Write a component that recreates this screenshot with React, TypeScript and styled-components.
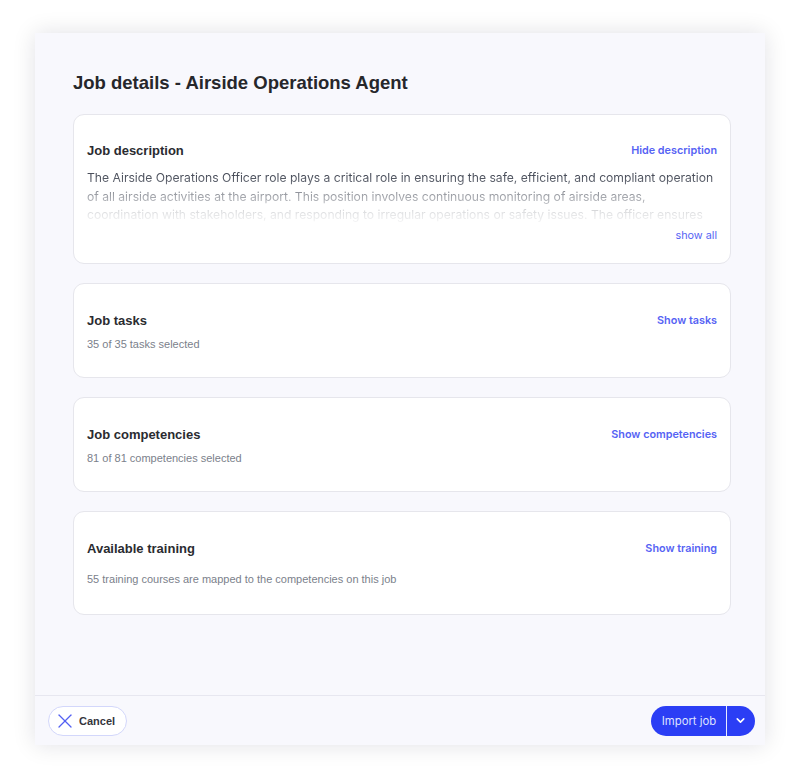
import React from "react";
import styled, { createGlobalStyle } from "styled-components";
import { X, ChevronDown } from "lucide-react";

const GlobalStyle = createGlobalStyle`
  html, body { margin: 0; padding: 0; background: #ffffff; }
  * { box-sizing: border-box; }
`;

const Page = styled.div`
  padding: 33px 35px 30px 35px;
`;

const Modal = styled.div`
  width: 730px;
  height: 712px;
  background: #f8f8fd;
  box-shadow: 0 0 22px rgba(20, 20, 40, 0.12);
  display: flex;
  flex-direction: column;
`;

const Content = styled.div`
  flex: 1;
  padding: 38px 34px 0 38px;
  display: flex;
  flex-direction: column;
  gap: 19px;
`;

const Title = styled.h1`
  margin: 0;
  font-family: "Liberation Sans", Arial, sans-serif;
  font-weight: 700;
  font-size: 18.5px;
  line-height: 24px;
  color: #26272b;
`;

const Card = styled.section<{ $pt?: number; $pb?: number }>`
  background: #ffffff;
  border: 1px solid #e6e6ec;
  border-radius: 11px;
  padding: ${(p) => p.$pt ?? 28}px 13px ${(p) => p.$pb ?? 22}px 13px;
  display: flex;
  flex-direction: column;
`;

const CardHeader = styled.div`
  display: flex;
  justify-content: space-between;
  align-items: center;
  height: 18px;
`;

const CardTitle = styled.h2`
  margin: 0;
  font-family: "Liberation Sans", Arial, sans-serif;
  font-weight: 700;
  font-size: 13px;
  line-height: 18px;
  color: #2a2b30;
`;

const LinkButton = styled.button<{ $weight?: number }>`
  border: none;
  background: none;
  padding: 0;
  font-family: Inter, "Liberation Sans", sans-serif;
  font-weight: ${(p) => p.$weight ?? 600};
  font-size: 10.8px;
  line-height: 16px;
  color: #5663f4;
  cursor: pointer;
`;

const Subtitle = styled.p<{ $mt: number }>`
  margin: ${(p) => p.$mt}px 0 0 0;
  font-family: "Liberation Sans", Arial, sans-serif;
  font-size: 11px;
  line-height: 14px;
  color: #7b7f8b;
`;

const Description = styled.p`
  margin: 9px 0 0 0;
  height: 57px;
  overflow: hidden;
  font-family: Inter, "Liberation Sans", sans-serif;
  font-size: 12.15px;
  line-height: 18.5px;
  color: #4a4f5b;
  -webkit-mask-image: linear-gradient(to bottom, rgba(0,0,0,1) 12%, rgba(0,0,0,0.55) 45%, rgba(0,0,0,0.16) 78%, rgba(0,0,0,0.02) 100%);
  mask-image: linear-gradient(to bottom, rgba(0,0,0,1) 12%, rgba(0,0,0,0.55) 45%, rgba(0,0,0,0.16) 78%, rgba(0,0,0,0.02) 100%);
`;

const ShowAllRow = styled.div`
  display: flex;
  justify-content: flex-end;
  margin-top: 2px;
`;

const Footer = styled.footer`
  height: 50px;
  border-top: 1px solid #e7e7f0;
  display: flex;
  align-items: center;
  justify-content: space-between;
  padding: 0 10px 0 13px;
`;

const CancelButton = styled.button`
  height: 30px;
  width: 79px;
  border: 1px solid #d3d7fb;
  border-radius: 15px;
  background: #ffffff;
  display: flex;
  align-items: center;
  gap: 2px;
  padding: 0 0 0 4px;
  font-family: "Liberation Sans", Arial, sans-serif;
  font-weight: 700;
  font-size: 11px;
  color: #34353c;
  cursor: pointer;
`;

const SplitButton = styled.div`
  display: flex;
  height: 30px;
  border-radius: 15px;
  overflow: hidden;
  background: #2b3ef5;
`;

const PrimaryPart = styled.button`
  border: none;
  background: transparent;
  width: 76px;
  padding: 0 0 0 1px;
  font-family: Inter, "Liberation Sans", sans-serif;
  font-size: 11.3px;
  color: #dfe3ff;
  cursor: pointer;
  border-right: 1px solid #e8ebff;
`;

const ChevronPart = styled.button`
  border: none;
  background: transparent;
  width: 28px;
  display: flex;
  align-items: center;
  justify-content: center;
  padding: 0 2px 0 0;
  color: #ffffff;
  cursor: pointer;
`;

type SimpleCardProps = {
  title: string;
  action: string;
  sub: string;
  subGap: number;
  pb?: number;
};

const SimpleCard = ({ title, action, sub, subGap, pb }: SimpleCardProps) => (
  <Card $pt={28} $pb={pb}>
    <CardHeader>
      <CardTitle>{title}</CardTitle>
      <LinkButton>{action}</LinkButton>
    </CardHeader>
    <Subtitle $mt={subGap}>{sub}</Subtitle>
  </Card>
);

const descriptionText =
  "The Airside Operations Officer role plays a critical role in ensuring the safe, efficient, and compliant operation of all airside activities at the airport. This position involves continuous monitoring of airside areas, coordination with stakeholders, and responding to irregular operations or safety issues. The officer ensures that all activities comply with regulatory requirements and airport procedures, and supports a strong safety culture.";

export default function App() {
  return (
    <>
      <GlobalStyle />
      <Page>
        <Modal>
          <Content>
            <Title>Job details - Airside Operations Agent</Title>
            <Card $pt={27} $pb={19}>
              <CardHeader>
                <CardTitle>Job description</CardTitle>
                <LinkButton>Hide description</LinkButton>
              </CardHeader>
              <Description>{descriptionText}</Description>
              <ShowAllRow>
                <LinkButton $weight={400}>show all</LinkButton>
              </ShowAllRow>
            </Card>
            <SimpleCard title="Job tasks" action="Show tasks" sub="35 of 35 tasks selected" subGap={7} pb={26} />
            <SimpleCard
              title="Job competencies"
              action="Show competencies"
              sub="81 of 81 competencies selected"
              subGap={7}
              pb={26}
            />
            <SimpleCard
              title="Available training"
              action="Show training"
              sub="55 training courses are mapped to the competencies on this job"
              subGap={14}
              pb={28}
            />
          </Content>
          <Footer>
            <CancelButton>
              <X size={24} strokeWidth={1.3} color="#5360f2" />
              Cancel
            </CancelButton>
            <SplitButton>
              <PrimaryPart>Import job</PrimaryPart>
              <ChevronPart>
                <ChevronDown size={13} strokeWidth={3} />
              </ChevronPart>
            </SplitButton>
          </Footer>
        </Modal>
      </Page>
    </>
  );
}
